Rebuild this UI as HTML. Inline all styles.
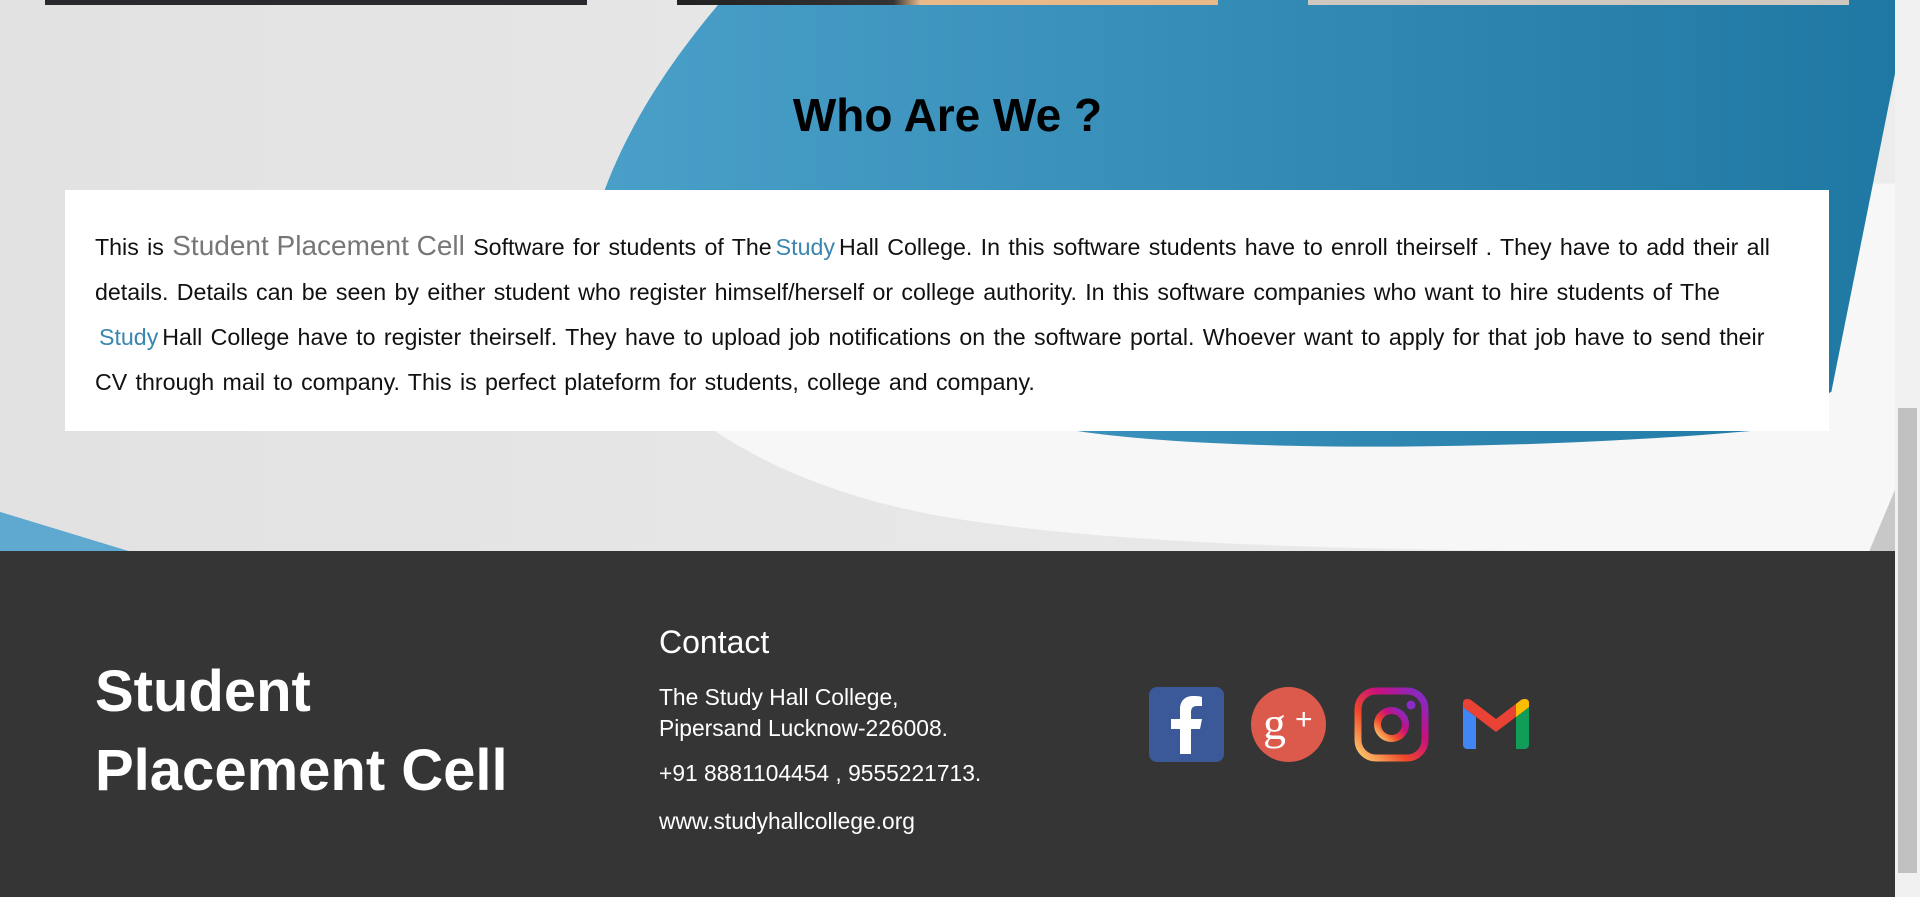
<!DOCTYPE html>
<html><head><meta charset="utf-8"><style>
*{margin:0;padding:0;box-sizing:border-box}
html,body{width:1920px;height:897px;overflow:hidden;font-family:"Liberation Sans",sans-serif;background:#e4e4e4}
.bg{position:absolute;left:0;top:0}
.strip{position:absolute;top:0;height:5px}
h2{position:absolute;left:0;width:1895px;text-align:center;top:88px;font-size:46px;font-weight:bold;color:#000}
.box{position:absolute;left:65px;top:190px;width:1764px;height:241px;background:#fff;padding:33px 30px 0 30px;font-size:23.2px;line-height:45px;color:#111;word-spacing:1.9px}
.g{color:#777;font-size:28px;word-spacing:0}
.b{color:#3a86b0;margin:0 4px}
footer{position:absolute;left:0;top:551px;width:1895px;height:346px;background:#353535;color:#fff}
.sb{position:absolute;right:0;top:0;width:25px;height:897px;background:#f1f1f1}
.th{position:absolute;right:3px;top:408px;width:19px;height:465px;background:#c1c1c1}
.c{position:absolute;left:659px;font-size:22.8px}
</style></head><body>
<svg class="bg" width="1895" height="551" viewBox="0 0 1548 450" preserveAspectRatio="none">
<defs><linearGradient id="bl" x1="0" x2="1" y1="0" y2="0"><stop offset="0" stop-color="#4aa0c9"/><stop offset="1" stop-color="#1f78a3"/></linearGradient>
<linearGradient id="gy" x1="0" x2="1"><stop offset="0" stop-color="#e2e2e2"/><stop offset="1" stop-color="#ececec"/></linearGradient></defs>
<rect width="1548" height="450" fill="url(#gy)"/>
<path d="M470,200 C490,290 580,385 760,420 C950,455 1300,450 1548,450 L1548,150 L1400,150 L700,160 Z" fill="#f7f7f7"/>
<path d="M590,0 L1548,0 L1548,60 L1496,320 L1430,352 C1250,368 1000,370 880,352 L480,330 C463,250 470,140 590,0 Z" fill="url(#bl)"/>
<path d="M0,418 L0,450 L105,450 Z" fill="#5fa8cf"/>
<path d="M1527,450 L1548,400 L1548,450 Z" fill="#c8c8c8"/>
</svg>
<div class="strip" style="left:45px;width:542px;background:#2a2a2e"></div>
<div class="strip" style="left:677px;width:541px;background:linear-gradient(90deg,#222 0,#333 40%,#e9b98a 45%,#e9b98a 100%)"></div>
<div class="strip" style="left:1308px;width:541px;background:#cfc8c0"></div>
<h2>Who Are We ?</h2>
<div class="box">This is <span class="g">Student Placement Cell</span> Software for students of The<span class="b">Study</span>Hall College. In this software students have to enroll theirself . They have to add their all details. Details can be seen by either student who register himself/herself or college authority. In this software companies who want to hire students of The <span class="b">Study</span>Hall College have to register theirself. They have to upload job notifications on the software portal. Whoever want to apply for that job have to send their CV through mail to company. This is perfect plateform for students, college and company.</div>
<footer>
<div style="position:absolute;left:95px;top:101px;font-size:58px;font-weight:bold;line-height:79px">Student<br>Placement Cell</div>
<div style="position:absolute;left:659px;top:73px;font-size:32px">Contact</div>
<div class="c" style="top:131px;line-height:31px">The Study Hall College,<br>Pipersand Lucknow-226008.</div>
<div class="c" style="top:209px">+91 8881104454 , 9555221713.</div>
<div class="c" style="top:257px">www.studyhallcollege.org</div>
<svg style="position:absolute;left:1149px;top:136px" width="75" height="75" viewBox="0 0 75 75"><rect width="75" height="75" rx="8" fill="#3b5998"/><path d="M42,67 V42 H51 L53,32 H42 V25 C42,21 44,19 48,19 H53 V10 C50,9 47,9 44,9 C36,9 31,14 31,22 V32 H22 V42 H31 V67 Z" fill="#fff"/></svg>
<svg style="position:absolute;left:1251px;top:136px" width="75" height="75" viewBox="0 0 75 75"><circle cx="37.5" cy="37.5" r="37.5" fill="#dc5a4b"/><text x="12" y="52" font-family="Liberation Serif,serif" font-size="46" fill="#fff">g</text><text x="44" y="42" font-family="Liberation Sans,sans-serif" font-size="30" fill="#fff">+</text></svg>
<svg style="position:absolute;left:1354px;top:136px" width="75" height="75" viewBox="0 0 75 75"><defs><linearGradient id="ig" x1="0" y1="1" x2="1" y2="0"><stop offset="0" stop-color="#fcd26f"/><stop offset=".35" stop-color="#f0472a"/><stop offset=".65" stop-color="#c7107f"/><stop offset="1" stop-color="#7a2fd0"/></linearGradient></defs><rect x="4" y="4" width="67" height="67" rx="18" fill="none" stroke="url(#ig)" stroke-width="7"/><circle cx="37.5" cy="37.5" r="14" fill="none" stroke="url(#ig)" stroke-width="7"/><circle cx="57" cy="18" r="4.5" fill="#8a2bc8"/></svg>
<svg style="position:absolute;left:1463px;top:148px" width="66" height="50" viewBox="0 0 66 50"><path d="M0,8 V46 C0,48 2,50 4,50 H13 V18 Z" fill="#4285f4"/><path d="M53,18 V50 H62 C64,50 66,48 66,46 V8 Z" fill="#0f9d58"/><path d="M0,8 L33,33 L66,8 L66,4 C66,0 62,-1 58,1 L33,20 L8,1 C4,-1 0,0 0,4 Z" fill="#ea4335"/><path d="M53,18 L66,8 V4 C66,0 62,-1 58,1 L53,5 Z" fill="#fbbc04"/></svg>
</footer>
<div class="sb"><div class="th"></div></div>
</body></html>
